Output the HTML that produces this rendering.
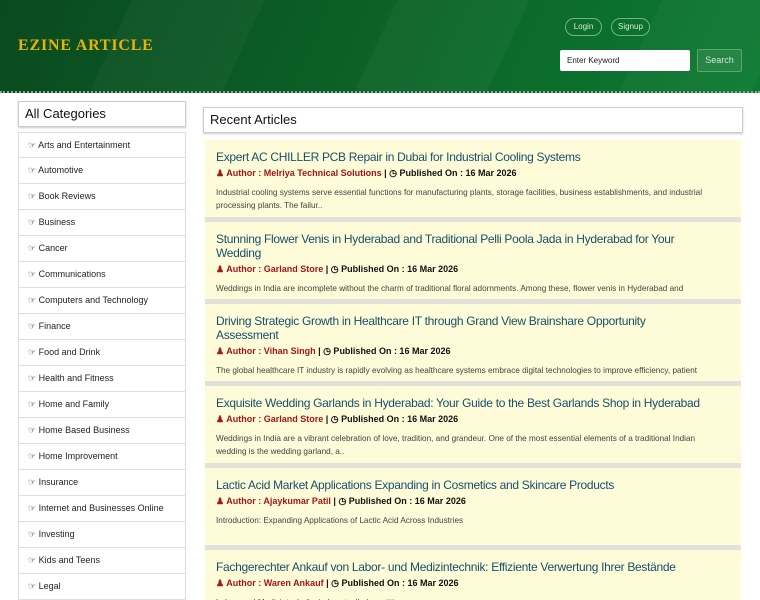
<!DOCTYPE html>
<html><head><meta charset="utf-8"><style>
*{box-sizing:border-box;margin:0;padding:0}
html,body{width:760px;height:600px;overflow:hidden}
body{background:#fff;font-family:"Liberation Sans",sans-serif;position:relative}
.hdr{position:absolute;left:0;top:0;width:760px;height:93px;background:linear-gradient(115deg,#0a4a1f 0%,#0b5a25 35%,#0c6a2b 65%,#0d7a31 100%);border-bottom:2px dotted #8aa890}
.hdr:before{content:"";position:absolute;inset:0;background:repeating-linear-gradient(115deg,rgba(255,255,255,0) 0 120px,rgba(255,255,255,.03) 120px 240px)}
.logo{position:absolute;left:18px;top:37px;font-family:"Liberation Serif",serif;font-size:16px;font-weight:bold;color:#e9b10a;letter-spacing:.8px}
.pill{position:absolute;top:18px;height:18px;border:1px solid #6fb487;border-radius:9px;color:#d8eadd;font-size:8px;line-height:16px;text-align:center}
.inp{position:absolute;left:560px;top:50px;width:130px;height:21px;background:#fff;border-radius:2px;font-size:8px;line-height:21px;padding-left:7px;color:#222}
.sb{position:absolute;left:697px;top:49px;width:45px;height:23px;border:1px solid #5aa574;background:rgba(255,255,255,.08);border-radius:2px;color:#cfe6d6;font-size:9px;line-height:21px;text-align:center}
.cathd{position:absolute;left:18px;top:101px;width:168px;height:26px;border:1px solid #ccc;box-shadow:0 1px 2px #ccc;font-size:13px;line-height:24px;padding-left:6px;color:#111}
.cats{position:absolute;left:18px;top:132px;width:168px}
.cats div{height:26px;border:1px solid #ddd;border-top:none;font-size:9px;line-height:25px;padding-left:9px;color:#222}
.cats div:first-child{border-top:1px solid #ddd}
.rahd{position:absolute;left:203px;top:107px;width:540px;height:26px;border:1px solid #ccc;box-shadow:0 1px 2px #ccc;font-size:13px;line-height:24px;padding-left:6px;color:#111}
.art{position:absolute;left:205px;width:536px;height:82px;background:#fdfbd8;border-bottom:5px solid #e2e2da;padding:10px 11px 0;overflow:hidden}
.t{font-size:12px;letter-spacing:-0.3px;line-height:14px;color:#17506e}
.m{margin-top:2px;font-size:9px;line-height:14px;font-weight:bold;color:#111}
.m b{color:#a3161a}
.d{margin-top:6px;font-size:8.2px;line-height:13px;color:#444;height:26px;overflow:hidden;padding-right:10px}
</style></head><body>
<div class="hdr">
<div class="logo">EZINE ARTICLE</div>
<div class="pill" style="left:565px;width:37px">Login</div>
<div class="pill" style="left:611px;width:39px">Signup</div>
<div class="inp">Enter Keyword</div>
<div class="sb">Search</div>
</div>
<div class="cathd">All Categories</div>
<div class="cats">
<div>☞ Arts and Entertainment</div><div>☞ Automotive</div><div>☞ Book Reviews</div><div>☞ Business</div><div>☞ Cancer</div><div>☞ Communications</div><div>☞ Computers and Technology</div><div>☞ Finance</div><div>☞ Food and Drink</div><div>☞ Health and Fitness</div><div>☞ Home and Family</div><div>☞ Home Based Business</div><div>☞ Home Improvement</div><div>☞ Insurance</div><div>☞ Internet and Businesses Online</div><div>☞ Investing</div><div>☞ Kids and Teens</div><div>☞ Legal</div>
</div>
<div class="rahd">Recent Articles</div>
<div class="art" style="top:140px"><div class="t">Expert AC CHILLER PCB Repair in Dubai for Industrial Cooling Systems</div><div class="m"><b>&#9823; Author : Melriya Technical Solutions</b> | &#9719; Published On : 16 Mar 2026</div><div class="d">Industrial cooling systems serve essential functions for manufacturing plants, storage facilities, business establishments, and industrial processing plants. The failur..</div></div>
<div class="art" style="top:222px"><div class="t">Stunning Flower Venis in Hyderabad and Traditional Pelli Poola Jada in Hyderabad for Your<br>Wedding</div><div class="m"><b>&#9823; Author : Garland Store</b> | &#9719; Published On : 16 Mar 2026</div><div class="d">Weddings in India are incomplete without the charm of traditional floral adornments. Among these, flower venis in Hyderabad and</div></div>
<div class="art" style="top:304px"><div class="t">Driving Strategic Growth in Healthcare IT through Grand View Brainshare Opportunity<br>Assessment</div><div class="m"><b>&#9823; Author : Vihan Singh</b> | &#9719; Published On : 16 Mar 2026</div><div class="d">The global healthcare IT industry is rapidly evolving as healthcare systems embrace digital technologies to improve efficiency, patient</div></div>
<div class="art" style="top:386px"><div class="t">Exquisite Wedding Garlands in Hyderabad: Your Guide to the Best Garlands Shop in Hyderabad</div><div class="m"><b>&#9823; Author : Garland Store</b> | &#9719; Published On : 16 Mar 2026</div><div class="d">Weddings in India are a vibrant celebration of love, tradition, and grandeur. One of the most essential elements of a traditional Indian wedding is the wedding garland, a..</div></div>
<div class="art" style="top:468px"><div class="t">Lactic Acid Market Applications Expanding in Cosmetics and Skincare Products</div><div class="m"><b>&#9823; Author : Ajaykumar Patil</b> | &#9719; Published On : 16 Mar 2026</div><div class="d">Introduction: Expanding Applications of Lactic Acid Across Industries</div></div>
<div class="art" style="top:550px"><div class="t">Fachgerechter Ankauf von Labor- und Medizintechnik: Effiziente Verwertung Ihrer Bestände</div><div class="m"><b>&#9823; Author : Waren Ankauf</b> | &#9719; Published On : 16 Mar 2026</div><div class="d">Labor- und Medizintechnik sind wertvolle Investitionen</div></div>
</body></html>
